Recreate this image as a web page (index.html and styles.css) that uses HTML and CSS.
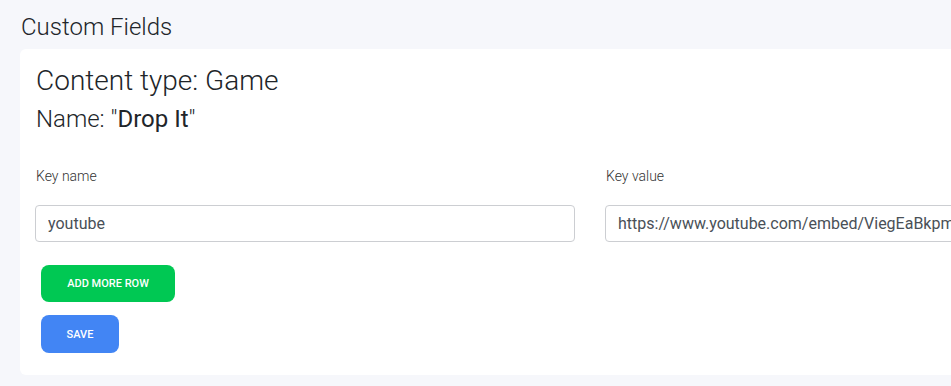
FILE: index.html
```html
<!DOCTYPE html>
<html lang="en">
  <head>
    <meta charset="UTF-8" />
    <meta name="viewport" content="width=device-width, initial-scale=1.0" />
    <title>Custom Fields</title>
    <link rel="stylesheet" href="styles.css">
  </head>
  <body>
    <div class="page">
      <h1 class="page-title">Custom Fields</h1>

      <div class="card">
        <h2 class="content-type">Content type: Game</h2>
        <h3 class="content-name">Name: "<strong>Drop It</strong>"</h3>

        <div class="field-row">
          <div class="field">
            <label for="keyName">Key name</label>
            <input type="text" id="keyName" value="youtube" />
          </div>
          <div class="field">
            <label for="keyValue">Key value</label>
            <input
              type="text"
              id="keyValue"
              value="https://www.youtube.com/embed/ViegEaBkpmo"
            />
          </div>
        </div>

        <div class="actions">
          <button class="btn btn-green">Add more row</button>
          <button class="btn btn-blue">Save</button>
        </div>
      </div>
    </div>
  </body>
</html>
```
FILE: styles.css
```css
* {
  margin: 0;
  padding: 0;
  box-sizing: border-box;
}
body {
  font-family: Roboto, "Liberation Sans", sans-serif;
  background: #f6f7fb;
  color: #212529;
  overflow: hidden;
}
.page {
  padding: 12px 0 0 20px;
  width: 1200px;
}
.page-title {
  font-size: 24px;
  font-weight: 300;
  line-height: 30px;
  margin-left: 1px;
  margin-bottom: 7px;
}
.card {
  background: #fff;
  border-radius: 6px;
  padding: 14px 15px 22px;
  height: 326px;
}
.content-type,
.content-name,
.field label {
  padding-left: 1px;
}
.content-type {
  font-size: 28px;
  font-weight: 300;
  line-height: 36px;
  margin-bottom: 6px;
}
.content-name {
  font-size: 24px;
  font-weight: 300;
  line-height: 28px;
}
.content-name strong {
  font-weight: 400;
}
.field-row {
  display: flex;
  gap: 30px;
  margin-top: 33px;
}
.field {
  display: flex;
  flex-direction: column;
  width: 540px;
}
.field label {
  font-size: 14px;
  font-weight: 300;
  line-height: 20px;
  margin-bottom: 19px;
  color: #333;
}
.field input {
  height: 37px;
  border: 1px solid #ccced2;
  border-radius: 4px;
  padding: 0 12px;
  font-family: inherit;
  font-size: 16px;
  color: #495057;
  outline: none;
}
.actions {
  display: flex;
  flex-direction: column;
  align-items: flex-start;
  gap: 13px;
  margin: 23px 0 0 6px;
}
.btn {
  border: none;
  border-radius: 8px;
  color: #fff;
  font-family: inherit;
  font-size: 11px;
  font-weight: 500;
  text-transform: uppercase;
  height: 37px;
  padding: 0;
}
.btn-green {
  background: #00c853;
  width: 134px;
}
.btn-blue {
  background: #4285f4;
  width: 78px;
  height: 38px;
}
```
